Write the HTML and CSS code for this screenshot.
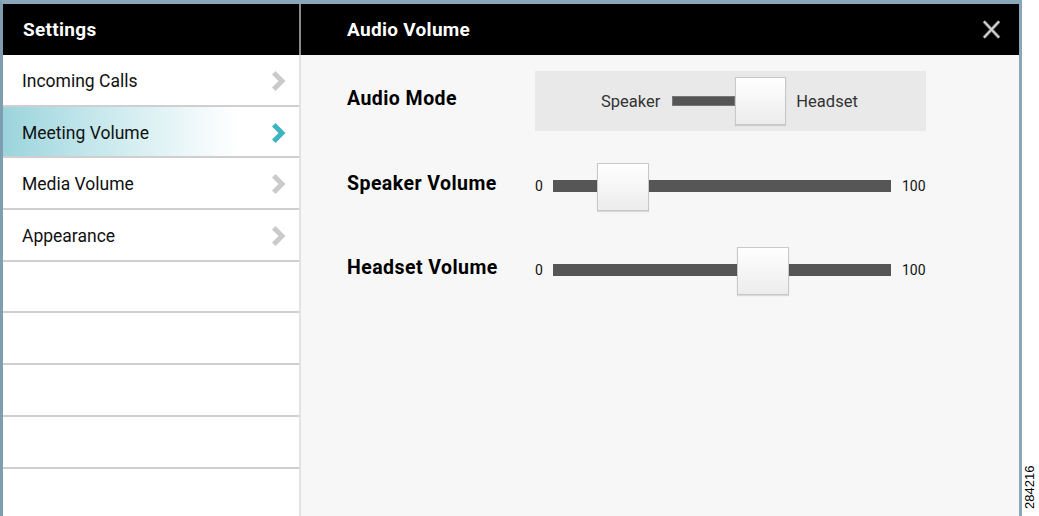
FILE: index.html
```html
<!DOCTYPE html>
<html>
<head>
<meta charset="utf-8">
<link rel="stylesheet" href="styles.css">
</head>
<body>
<div class="frame">
  <aside class="side">
    <div class="head"><span class="title">Settings</span></div>
    <ul class="menu">
      <li class="item"><span>Incoming Calls</span><svg class="chev" viewBox="0 0 14 20"><path d="M0 3.5 L3.5 0 L13.5 10 L3.5 20 L0 16.5 L6.5 10 Z"/></svg></li>
      <li class="item active"><span>Meeting Volume</span><svg class="chev" viewBox="0 0 14 20"><path d="M0 3.5 L3.5 0 L13.5 10 L3.5 20 L0 16.5 L6.5 10 Z"/></svg></li>
      <li class="item"><span>Media Volume</span><svg class="chev" viewBox="0 0 14 20"><path d="M0 3.5 L3.5 0 L13.5 10 L3.5 20 L0 16.5 L6.5 10 Z"/></svg></li>
      <li class="item"><span>Appearance</span><svg class="chev" viewBox="0 0 14 20"><path d="M0 3.5 L3.5 0 L13.5 10 L3.5 20 L0 16.5 L6.5 10 Z"/></svg></li>
      <li class="item"></li>
      <li class="item"></li>
      <li class="item"></li>
      <li class="item"></li>
      <li class="item"></li>
    </ul>
  </aside>
  <main class="main">
    <div class="head mainhead">
      <span class="title">Audio Volume</span>
      <svg class="close" viewBox="0 0 20 20"><path d="M2 1.5 L18 18.5 M18 1.5 L2 18.5" stroke="#6a6a6a" stroke-width="3.6"/><path d="M2 1.5 L18 18.5 M18 1.5 L2 18.5" stroke="#d4d4d4" stroke-width="2"/></svg>
    </div>
    <div class="content">
      <div class="row mode">
        <span class="label">Audio Mode</span>
        <div class="modebox">
          <span class="opt">Speaker</span>
          <div class="modetrack"></div>
          <div class="thumb modethumb"></div>
          <span class="opt">Headset</span>
        </div>
      </div>
      <div class="row vol first">
        <span class="label">Speaker Volume</span>
        <div class="slider">
          <span class="min">0</span>
          <div class="track"><div class="thumb" style="left:44px"></div></div>
          <span class="max">100</span>
        </div>
      </div>
      <div class="row vol second">
        <span class="label">Headset Volume</span>
        <div class="slider">
          <span class="min">0</span>
          <div class="track"><div class="thumb" style="left:184px"></div></div>
          <span class="max">100</span>
        </div>
      </div>
    </div>
  </main>
</div>
<div class="figno">284216</div>
</body>
</html>
```
FILE: styles.css
```css
html, body {
  margin: 0;
  padding: 0;
  background: #ffffff;
}
body {
  width: 1039px;
  height: 516px;
  overflow: hidden;
  position: relative;
  font-family: Roboto, "Liberation Sans", sans-serif;
}
.frame {
  box-sizing: border-box;
  width: 1022px;
  height: 516px;
  border-top: 4px solid #8aa6b8;
  border-left: 3px solid #7f9db1;
  border-right: 3px solid #8aa6b8;
  display: flex;
  background: #f7f7f7;
}
.side {
  width: 296px;
  flex: none;
  background: #ffffff;
  border-right: 2px solid #e2e2e2;
  display: flex;
  flex-direction: column;
}
.head {
  height: 51px;
  background: #000;
  display: flex;
  align-items: center;
  flex: none;
}
.side .head {
  padding-left: 20px;
  margin-right: -2px;
  border-right: 2px solid #8a8a8a;
}
.title {
  color: #fff;
  font-weight: bold;
  font-size: 19px;
  letter-spacing: 0.3px;
}
.menu {
  list-style: none;
  margin: 0;
  padding: 0;
}
.item {
  box-sizing: border-box;
  height: 51.7px;
  border-bottom: 2px solid #cfcfcf;
  display: flex;
  align-items: center;
  justify-content: space-between;
  padding: 0 13px 0 19px;
  font-size: 17.5px;
  color: #111;
}
.item span {
  padding-top: 2px;
}
.chev {
  width: 14px;
  height: 20px;
  fill: #cacaca;
  margin-top: 2px;
}
.active {
  background: linear-gradient(to right, #9bd4dc 0%, #c4e7ec 30%, #f3fafb 68%, #ffffff 80%);
}
.active .chev {
  fill: #3fb4c1;
}
.main {
  flex: 1;
  display: flex;
  flex-direction: column;
}
.mainhead {
  padding-left: 46px;
  padding-right: 18px;
  justify-content: space-between;
}
.close {
  width: 19px;
  height: 19px;
}
.content {
  padding-left: 46px;
  display: flex;
  flex-direction: column;
}
.row {
  display: flex;
  align-items: center;
}
.label {
  width: 188px;
  flex: none;
  font-weight: bold;
  font-size: 19.5px;
  letter-spacing: 0.45px;
  color: #000;
  margin-bottom: 6px;
}
.mode {
  margin-top: 16px;
  height: 60px;
}
.modebox {
  width: 391px;
  height: 60px;
  background: #e9e9e9;
  display: flex;
  align-items: center;
  padding-left: 66px;
  box-sizing: border-box;
}
.opt {
  font-size: 16.5px;
  color: #333;
}
.modetrack {
  width: 63px;
  height: 10px;
  background: #555;
  margin-left: 12px;
  border: 1px solid #777;
  box-sizing: border-box;
}
.thumb {
  box-sizing: border-box;
  width: 52px;
  height: 48px;
  background: linear-gradient(#ffffff, #ececec);
  border: 1px solid #c8c8c8;
  box-shadow: 0 1px 1px rgba(0,0,0,0.12);
}
.modethumb {
  width: 51px;
  margin-right: 10px;
  flex: none;
}
.vol {
  height: 48px;
}
.first {
  margin-top: 31px;
}
.second {
  margin-top: 36px;
}
.slider {
  display: flex;
  align-items: center;
  font-size: 14px;
  color: #111;
}
.min {
  width: 18px;
}
.track {
  position: relative;
  width: 338px;
  height: 12px;
  background: #565656;
}
.track .thumb {
  position: absolute;
  top: -17px;
}
.max {
  margin-left: 11px;
}
.figno {
  position: absolute;
  left: 1022px;
  top: 462px;
  width: 16px;
  height: 50px;
  writing-mode: vertical-rl;
  transform: rotate(180deg);
  font-family: "Liberation Sans", Arial, sans-serif;
  font-size: 13px;
  color: #000;
  text-align: center;
  line-height: 16px;
}
```
